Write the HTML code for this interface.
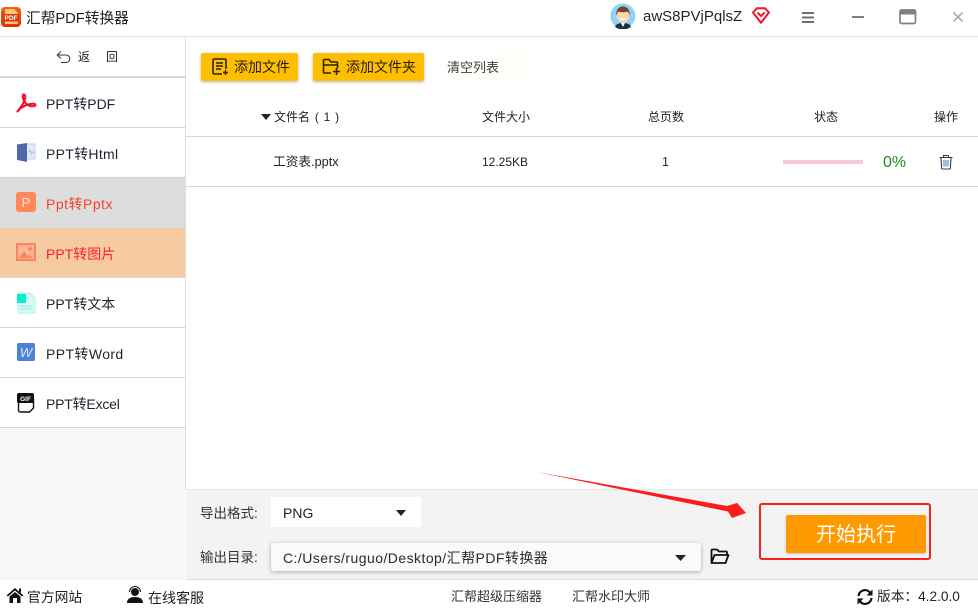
<!DOCTYPE html>
<html lang="zh"><head><meta charset="utf-8"><title>汇帮PDF转换器</title>
<style>
*{box-sizing:border-box}
html,body{margin:0;padding:0}
body{width:978px;height:607px;position:relative;overflow:hidden;background:#fff;font-family:"Liberation Sans","Noto Sans CJK SC",sans-serif;color:#222;font-size:13px}
.a{position:absolute;white-space:nowrap}
.t{line-height:20px}
.row{position:absolute;left:0;width:185px;height:50px;border-bottom:1px solid #d4d4d4}
.row span{position:absolute;left:46px;top:16px;font-size:14px;line-height:20px;white-space:nowrap;color:#1c2430}
.row svg{position:absolute;left:15px;top:13px}
.btn{position:absolute;top:53px;height:28px;background:#ffbe00;border-radius:2px;box-shadow:0 1px 3px rgba(0,0,0,.3);font-size:14px;line-height:29px;color:#2b2200}
.line{position:absolute;height:1px;background:#d6d6d6}
</style></head><body>

<svg class="a" style="left:1px;top:7px" width="20" height="20" viewBox="0 0 20 20"><defs><linearGradient id="g" x1="0" y1="0" x2="0" y2="1"><stop offset="0" stop-color="#f4620f"/><stop offset="1" stop-color="#e22f05"/></linearGradient></defs><rect width="20" height="20" rx="4" fill="url(#g)"/><path d="M4 2h9l4 4v11H4z" fill="#ffc27a"/><rect x="2" y="7" width="16" height="7.500" fill="#d93a06"/><text x="10" y="13" font-size="6.500" font-weight="bold" text-anchor="middle" fill="#fff" font-family="Liberation Sans">PDF</text></svg>
<div class="a t" style="left:26px;top:9px;font-size:14.700px;color:#222">汇帮PDF转换器</div>

<svg class="a" style="left:610px;top:3px" width="26" height="26" viewBox="0 0 26 26"><circle cx="12.800" cy="13" r="12.500" fill="#8fd3fa"/><path d="M5 24c1-3 4-4 8-4s7 1 8 4q-4 2.500-8 2.500T5 24z" fill="#1f2c42"/><path d="M11 20h4l-2 4z" fill="#fff"/><rect x="6" y="10" width="14" height="6" rx="2.500" fill="#f0bd94"/><circle cx="13" cy="13" r="6.500" fill="#fbd7b5"/><path d="M6.500 13c-1-7 3-9.500 6.500-9.500s7.500 2.500 6.500 9.500c-.5-3-1-4-2.500-4.500-3 1-6 1-8 0-1.500.5-2 1.500-2.500 4.500z" fill="#7a4320"/><path d="M9.500 15c2 2.500 5 2.500 7 0z" fill="#fff"/></svg>
<div class="a t" style="left:643px;top:7px;font-size:15px;color:#1c2430">awS8PVjPqlsZ</div>
<svg class="a" style="left:752px;top:7px" width="18" height="17" viewBox="0 0 18 17"><path d="M5 1.200h8l4 4.300-8 10.300L1 5.500z" fill="#fff" stroke="#f0142d" stroke-width="2" stroke-linejoin="round"/><path d="M5.500 5.500 9 9l3.500-3.500" fill="none" stroke="#f0142d" stroke-width="2"/></svg>
<svg class="a" style="left:800px;top:10px" width="16" height="14"><path d="M2 3h12M2 7.500h12M2 12h12" stroke="#707070" stroke-width="2"/></svg>
<div class="a" style="left:852px;top:16px;width:12px;height:2px;background:#808080"></div>
<svg class="a" style="left:899px;top:9px" width="18" height="16"><rect x="1" y="1" width="15.500" height="13.500" rx="1.500" fill="#fff" stroke="#808080" stroke-width="1.700"/><rect x="1" y="1" width="15.500" height="4.500" fill="#808080"/></svg>
<svg class="a" style="left:952px;top:11px" width="12" height="12"><path d="M1.500 1.500l9 9M10.500 1.500l-9 9" stroke="#a0a0a0" stroke-width="1.500"/></svg>
<div class="line" style="left:0;top:36px;width:978px;height:1px;background:#e2e2e2"></div>

<!-- sidebar -->
<div class="a" style="left:0;top:428px;width:185px;height:152px;background:#f7f7f7"></div>
<div class="a" style="left:185px;top:37px;width:1px;height:452px;background:#dcdcdc"></div>
<svg class="a" style="left:56px;top:50px" width="15" height="14" viewBox="0 0 15 14"><path d="M5 1.500 1.200 5 5 8.500M1.500 5H10c5 0 5 7.500 0 7.500H5" fill="none" stroke="#333" stroke-width="1"/></svg>
<div class="a t" style="left:78px;top:47px;font-size:12px;color:#222">返</div>
<div class="a t" style="left:106px;top:47px;font-size:12px;color:#222">回</div>
<div class="a" style="left:0;top:76px;width:185px;height:2px;background:#d6d6d6"></div>

<div class="row" style="top:78px"><svg width="22" height="24" viewBox="0 0 22 24"><path d="M2.500 20.500C5 17 9.500 12 10.200 7 10.600 2.500 7.800 2.500 7.800 5c0 4 3 9 6.700 9.800 3 .7 6 .5 6-.8 0-1.800-4-1.500-7.500-.5C9 14.800 5 17 2.500 20.500z" fill="none" stroke="#f4082c" stroke-width="2" stroke-linejoin="round"/></svg><span>PPT转PDF</span></div>
<div class="row" style="top:128px"><svg width="22" height="24" viewBox="0 0 22 24"><rect x="9" y="3" width="11" height="15" fill="#e4e9f6" stroke="#b8c4e6" stroke-width=".8"/><path d="M2 3.500l10-1.500v19l-10-2z" fill="#5067ad"/><path d="M13 11l1.500 0 1-2 1 4 1-2 1.500 0" fill="none" stroke="#a0aed8" stroke-width=".7"/></svg><span style="letter-spacing:.3px">PPT转Html</span></div>
<div class="row" style="top:178px;background:#dddddd;border-bottom:0"><svg width="22" height="24" viewBox="0 0 22 24"><rect x="1" y="1" width="20" height="20" rx="3" fill="#fe8a59"/><text x="11" y="16" font-size="13" text-anchor="middle" fill="#ffe4d8" font-family="Liberation Sans">P</text></svg><span style="color:#f4432c;letter-spacing:.5px">Ppt转Pptx</span></div>
<div class="row" style="top:228px;background:#f7cba1;border-bottom:1px solid #dcdcdc"><svg width="22" height="24" viewBox="0 0 22 24"><rect x="2" y="3" width="18" height="16" fill="#fbb695" stroke="#fb8458" stroke-width="2"/><path d="M4 17l5-7 5 7z" fill="#fb8458"/><circle cx="15" cy="8" r="2" fill="#fb8458"/><path d="M11 17l3-3 4 3z" fill="#fb8458"/></svg><span style="color:#fb2024">PPT转图片</span></div>
<div class="row" style="top:278px"><svg width="22" height="24" viewBox="0 0 22 24"><path d="M3 2h12l5 5v15H3z" fill="#d8faf4" stroke="#b0f3e8"/><rect x="2" y="3" width="9" height="9" fill="#06efce"/><path d="M5 15h13M5 18h13" stroke="#8ceadb"/></svg><span>PPT转文本</span></div>
<div class="row" style="top:328px"><svg width="22" height="24" viewBox="0 0 22 24"><rect x="2" y="2" width="18" height="18" rx="2" fill="#4d82d4"/><text x="11" y="16" font-size="13" font-style="italic" text-anchor="middle" fill="#d8e6fb" font-family="Liberation Sans">W</text></svg><span style="letter-spacing:.4px">PPT转Word</span></div>
<div class="row" style="top:378px"><svg width="22" height="24" viewBox="0 0 22 24"><path d="M3.500 8v11q0 2 2 2h9l4-4V8" fill="#fff" stroke="#111" stroke-width="1.400"/><rect x="2" y="2" width="17" height="10" rx="2" fill="#111"/><text x="10.500" y="10" font-size="6.500" font-weight="bold" text-anchor="middle" fill="#fff" font-family="Liberation Sans">GIF</text></svg><span style="letter-spacing:-.2px">PPT转Excel</span></div>

<!-- toolbar -->
<div class="btn" style="left:201px;width:97px"><svg class="a" style="left:10px;top:5px" width="18" height="18" viewBox="0 0 18 18"><path d="M15 11V2.500Q15 1 13.500 1h-10Q2 1 2 2.500v12Q2 16 3.500 16H11" fill="none" stroke="#2b2200" stroke-width="1.600"/><path d="M5 5h7M5 8h7M5 11h5M12 14.500h5M14.500 12v5" stroke="#2b2200" stroke-width="1.400"/></svg><span class="a" style="left:33px;top:0">添加文件</span></div>
<div class="btn" style="left:313px;width:111px"><svg class="a" style="left:9px;top:5px" width="19" height="18" viewBox="0 0 19 18"><path d="M9 15H2.500Q1.500 15 1.500 14V2.500Q1.500 1.500 2.500 1.500H7l2 2.500h5.500q1 0 1 1V10" fill="none" stroke="#2b2200" stroke-width="1.600"/><path d="M11 13.500h7M14.500 10v7M2 7h13" stroke="#2b2200" stroke-width="1.600"/></svg><span class="a" style="left:33px;top:0">添加文件夹</span></div>
<div class="a" style="left:443px;top:53px;width:92px;height:28px;background:#fffffb"></div>
<div class="a t" style="left:447px;top:58px;font-size:13px;color:#3c3c3c">清空列表</div>

<!-- table -->
<svg class="a" style="left:261px;top:114px" width="10" height="6"><path d="M0 0h10L5 6z" fill="#222"/></svg>
<div class="a t" style="left:274px;top:107px;font-size:12px;word-spacing:1.500px">文件名 ( 1 )</div>
<div class="a t" style="left:482px;top:107px;font-size:12px">文件大小</div>
<div class="a t" style="left:648px;top:107px;font-size:12px">总页数</div>
<div class="a t" style="left:814px;top:107px;font-size:12px">状态</div>
<div class="a t" style="left:934px;top:107px;font-size:12px">操作</div>
<div class="line" style="left:186px;top:136px;width:792px"></div>
<div class="a t" style="left:273px;top:152px;font-size:12.700px">工资表.pptx</div>
<div class="a t" style="left:482px;top:152px;font-size:12px">12.25KB</div>
<div class="a t" style="left:662px;top:152px;font-size:12.500px">1</div>
<div class="a" style="left:783px;top:160px;width:80px;height:4px;background:#f9c9d9"></div>
<div class="a t" style="left:883px;top:153px;font-size:16px;color:#218a1a">0%</div>
<svg class="a" style="left:938px;top:154px" width="16" height="16" viewBox="0 0 16 16"><path d="M1.500 3.500h13M5.500 3.500V1.500h5v2" fill="none" stroke="#2c3e55" stroke-width="1.100"/><path d="M3 3.500 3.600 14q0 1 1 1h6.800q1 0 1-1L13 3.500" fill="none" stroke="#2c3e55" stroke-width="1.100"/><path d="M6 6v6.500M8 6v6.500M10 6v6.500" stroke="#5a87b5" stroke-width="1.100"/></svg>
<div class="line" style="left:186px;top:186px;width:792px"></div>

<!-- bottom panel -->
<div class="a" style="left:186px;top:489px;width:792px;height:91px;background:#f3f3f3;border-top:1px solid #e6e6e6;border-bottom:1px solid #dedede"></div>
<div class="a t" style="left:200px;top:504px;font-size:13.500px;color:#333">导出格式:</div>
<div class="a" style="left:271px;top:497px;width:150px;height:30px;background:#fff"></div>
<div class="a t" style="left:283px;top:503px;font-size:14px;color:#222">PNG</div>
<svg class="a" style="left:396px;top:510px" width="10" height="6"><path d="M0 0h10L5 6z" fill="#222"/></svg>
<div class="a t" style="left:200px;top:548px;font-size:13.500px;color:#333">输出目录:</div>
<div class="a" style="left:271px;top:543px;width:430px;height:28px;background:#fafafa;border-radius:3px;box-shadow:0 1px 4px rgba(0,0,0,.3)"></div>
<div class="a t" style="left:283px;top:548px;font-size:14px;color:#2a2a2a;letter-spacing:.45px">C:/Users/ruguo/Desktop/汇帮PDF转换器</div>
<svg class="a" style="left:675px;top:555px" width="11" height="6"><path d="M0 0h11L5.500 6z" fill="#222"/></svg>
<svg class="a" style="left:710px;top:548px" width="20" height="17" viewBox="0 0 20 17"><path d="M1.500 14.500V2.500q0-1 1-1H7l2 2h7q1 0 1 1V7" fill="none" stroke="#111" stroke-width="1.800"/><path d="M1.500 15 4.500 7h14l-3 8z" fill="none" stroke="#111" stroke-width="1.800" stroke-linejoin="round"/></svg>

<svg class="a" style="left:530px;top:465px" width="225" height="60"><path d="M7 7 197 41 207 38 216 48 202 53 198 46.500z" fill="#fb1b1b"/></svg>

<div class="a" style="left:759px;top:503px;width:172px;height:57px;border:2px solid #fb2020;border-radius:3px"></div>
<div class="a" style="left:786px;top:515px;width:140px;height:38px;background:#ff9900;border-radius:2px;box-shadow:0 1px 2px rgba(0,0,0,.2);color:#fff;font-size:20px;line-height:40px;text-align:center">开始执行</div>

<!-- footer -->
<svg class="a" style="left:6px;top:587px" width="18" height="16" viewBox="0 0 18 16"><path d="M9 1 .5 8.500 2 9.500 9 3.500l7 6 1.500-1z" fill="#111"/><path d="M3.500 9.500 9 5l5.500 4.500V16H11v-5H7v5H3.500z" fill="#111"/><rect x="13" y="1.500" width="2" height="4" fill="#111"/></svg>
<div class="a t" style="left:27px;top:588px;font-size:13.800px;color:#222">官方网站</div>
<svg class="a" style="left:126px;top:586px" width="18" height="17" viewBox="0 0 18 17"><circle cx="9" cy="6" r="4" fill="#111"/><path d="M3.500 6a5.500 5.500 0 0 1 11 0" fill="none" stroke="#111"/><path d="M1 17c0-4 3-6 8-6s8 2 8 6z" fill="#111"/></svg>
<div class="a t" style="left:148px;top:588px;font-size:14px;color:#222">在线客服</div>
<div class="a t" style="left:451px;top:587px;font-size:13px;color:#333">汇帮超级压缩器</div>
<div class="a t" style="left:572px;top:587px;font-size:13px;color:#333">汇帮水印大师</div>
<svg class="a" style="left:857px;top:589px" width="16" height="16" viewBox="0 0 16 16"><path d="M1.500 7A6.500 6.500 0 0 1 13 3.500M14.500 9A6.500 6.500 0 0 1 3 12.500" fill="none" stroke="#111" stroke-width="2.200"/><path d="M15.500 .5v6h-6zM.5 15.500v-6h6z" fill="#111"/></svg>
<div class="a t" style="left:877px;top:587px;font-size:13.700px;color:#222">版本：4.2.0.0</div>
</body></html>
